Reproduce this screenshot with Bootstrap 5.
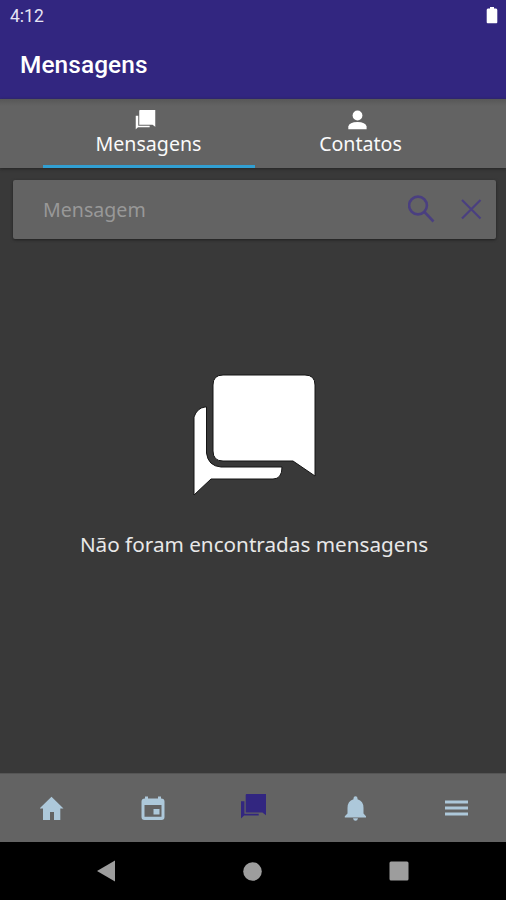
<!DOCTYPE html>
<html lang="pt-BR">
<head>
<meta charset="utf-8">
<meta name="viewport" content="width=device-width, initial-scale=1">
<title>Mensagens</title>
<link href="https://cdn.jsdelivr.net/npm/bootstrap@5.3.0/dist/css/bootstrap.min.css" rel="stylesheet">
<style>
  body { background: #393939; font-family: "Noto Sans", sans-serif; color: #f4f4f4; height: 900px; overflow: hidden; }
  svg { display: block; flex: none; }
  .app-header { background: #322680; height: 99px; font-family: Roboto, sans-serif; color: #fff; }
  .status-row { height: 32px; padding: 0 8px 0 10px; font-size: 17.5px; line-height: 32px; color: #e6e4f4; }
  .app-title { font-size: 24.4px; font-weight: 500; line-height: 32px; padding: 17px 0 0 20px; letter-spacing: .1px; }
  .tab-strip { height: 69px; padding: 0 39px 0 43px; background: linear-gradient(#575757, #636363 7px); box-shadow: 0 1px 3px #242424; }
  .tab-strip .nav-link { width: 212px; padding: 11px 0 0; color: #fafafa; font-size: 19.6px; line-height: 24px; border-bottom: 3px solid transparent; border-radius: 0; }
  .tab-strip .nav-link.active { border-color: #319fd2; }
  .tab-strip svg { margin: 0 7px 1px 0; }
  .tab-strip span { margin-right: 1px; }
  .search-card { height: 59px; margin: 12px 10px 0 13px; padding: 0 14px 1px 30px; background: #636363; border-radius: 2px; box-shadow: 0 1px 3px #202020; }
  .search-card input { background: transparent; color: #fff; font-size: 19.6px; line-height: 30px; padding: 2px 0 0; outline: 0; }
  .search-card input::placeholder { color: #989898; opacity: 1; }
  .empty-state { padding: 134px 0 0 3px; }
  .empty-state p { font-size: 20.7px; line-height: 30px; margin: 32px 1px 0 0; color: #e8e8e8; }
  .bottom-tabs { height: 69px; padding-left: 1px; background: #636363; border-top: 1px solid #555; color: #adc8da; }
  .system-nav { height: 58px; background: #000; color: #9d9d9d; padding: 0 97px; }
</style>
<script src="https://cdn.jsdelivr.net/npm/bootstrap@5.3.0/dist/js/bootstrap.bundle.min.js"></script>
</head>
<body class="d-flex flex-column">
<svg width="0" height="0" class="position-absolute" aria-hidden="true">
  <symbol id="chat" viewBox="0 0 124 124">
    <path d="M30 2H112Q122 2 122 12V103L100 88H30Q20 88 20 78V12Q20 2 30 2Z"/>
    <path d="M1 122V44Q4 35 12 34H13.5V80Q15 93 28 94H89Q89 106 80 106H18Z"/>
  </symbol>
  <symbol id="chat-small" viewBox="0 0 24 24">
    <path d="M5.500 0H24V20.500L20.500 17.800H4.500V1Q4.500 0 5.500 0z"/>
    <path d="M0 23.500V7H3.300V19H17V20.700H3z"/>
  </symbol>
</svg>
<header class="app-header flex-shrink-0">
  <div class="status-row d-flex justify-content-between align-items-center">
    <span>4:12</span>
    <svg width="12" height="18" viewBox="0 0 12 18" fill="#fff"><path d="M4 0h4v1.500h2q1.300 0 1.300 1.500V15.300q0 1-1 1h-8.600q-1 0-1-1V3q0-1.500 1.300-1.500h2z"/></svg>
  </div>
  <h1 class="app-title mb-0">Mensagens</h1>
</header>
<nav class="nav tab-strip flex-nowrap flex-shrink-0">
  <a class="nav-link active d-flex flex-column align-items-center" href="#">
    <svg width="21" height="21" viewBox="0 0 21 21" fill="#fff"><use href="#chat-small" x=".5" width="20" height="20"/></svg>
    <span>Mensagens</span>
  </a>
  <a class="nav-link d-flex flex-column align-items-center" href="#">
    <svg width="21" height="21" viewBox="0 0 21 21" fill="#fff"><circle cx="10.500" cy="5.500" r="4.900"/><path d="M1.300 19.200V16.500Q2.300 12.200 10.500 12Q18.500 12.200 19.600 16.500V19.200Z"/></svg>
    <span>Contatos</span>
  </a>
</nav>
<main class="flex-grow-1">
  <form class="search-card d-flex align-items-center">
    <input class="border-0 flex-grow-1" type="text" placeholder="Mensagem" aria-label="Mensagem">
    <svg width="28" height="28" viewBox="0 0 28 28" fill="none" stroke="#4a3f80" stroke-width="2.600"><circle cx="10" cy="10.500" r="8.900"/><path d="M16.500 17L25.500 26.500"/></svg>
    <svg width="22" height="22" viewBox="0 0 22 22" class="ms-4" fill="none" stroke="#4a3f80" stroke-width="2.200"><path d="M2 2L20.500 20.500M20.500 2L2 20.500"/></svg>
  </form>
  <section class="empty-state d-flex flex-column align-items-center">
    <svg width="124" height="124" fill="#fff" stroke="#151515" stroke-width="1"><use href="#chat"/></svg>
    <p>Não foram encontradas mensagens</p>
  </section>
</main>
<nav class="bottom-tabs d-flex flex-shrink-0">
  <a class="col d-flex justify-content-center align-items-center text-reset" href="#" aria-label="Início"><svg width="24" height="24" viewBox="0 0 24 24" fill="currentColor"><path d="M11.500 .8L23.500 12.500h-3.200V24H14v-8h-4v8H3V12.500H-.5z"/></svg></a>
  <a class="col d-flex justify-content-center align-items-center text-reset" href="#" aria-label="Agenda"><svg width="24" height="24" viewBox="0 0 24 24" fill="currentColor"><path fill-rule="evenodd" d="M4 .5h3v2h10v-2h3v2q3.500 0 3.500 3v15.500q0 3-3 3h-17q-3 0-3-3V5.500q0-3 3.500-3zM3.500 9V20.800h17V9zM12.500 13h6v5.500h-6z"/></svg></a>
  <a class="col d-flex justify-content-center align-items-center pb-1" href="#" aria-label="Mensagens"><svg width="25" height="25" fill="#322680"><use href="#chat-small"/></svg></a>
  <a class="col d-flex justify-content-center align-items-center text-reset" href="#" aria-label="Avisos"><svg width="22" height="25" viewBox="0 0 22 25" fill="currentColor"><path d="M11.500 .3q2 0 2 2v1q6 1.600 6 8.700v5.500l2.500 2.700V21.500H.8V20.200L3.500 17.500V12q0-7.100 6-8.700v-1q0-2 2-2zM9 22.200h5q-.5 2.500-2.500 2.500t-2.500-2.500z"/></svg></a>
  <a class="col d-flex justify-content-center align-items-center text-reset" href="#" aria-label="Menu"><svg width="24" height="18" viewBox="0 0 24 18" fill="currentColor"><path d="M1 1.500h23v3H1zM1 7.500h23v3H1zM1 13.500h23v3H1z"/></svg></a>
</nav>
<footer class="system-nav d-flex justify-content-between align-items-center flex-shrink-0">
  <svg width="18" height="22" viewBox="0 0 18 22" fill="currentColor"><path d="M0 11L18 .5V21.500z"/></svg>
  <svg width="20" height="19" viewBox="0 0 20 19" fill="currentColor"><circle cx="10.500" cy="9.500" r="9.300"/></svg>
  <svg width="20" height="20" viewBox="0 0 20 20" fill="currentColor"><rect x=".5" y=".5" width="19" height="19" rx="1.500"/></svg>
</footer>
</body>
</html>
